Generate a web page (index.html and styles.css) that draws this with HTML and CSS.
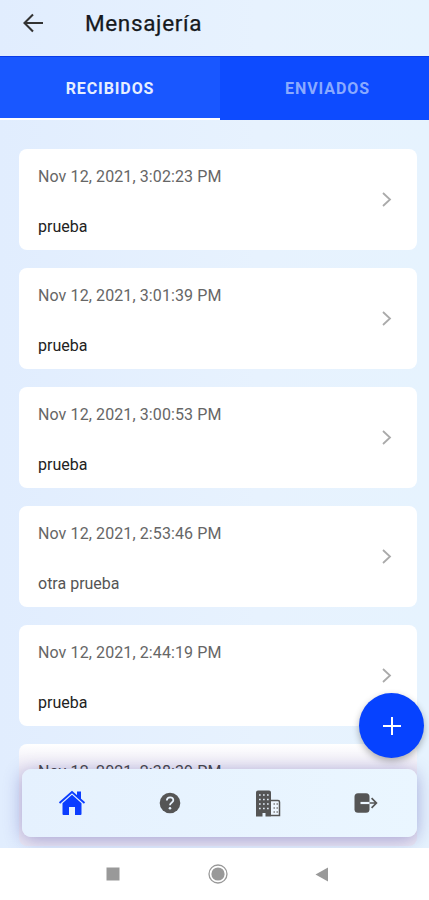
FILE: index.html
```
<!DOCTYPE html>
<html lang="es">
<head>
<meta charset="utf-8">
<title>Mensajería</title>
<link rel="stylesheet" href="styles.css">
</head>
<body>
<div class="app">
  <header class="header">
    <svg class="back" width="22" height="20" viewBox="0 0 22 20"><path d="M11 1.500 2.500 10l8.500 8.500M2.500 10H21"/></svg>
    <h1 class="title">Mensajería</h1>
  </header>
  <nav class="tabs">
    <div class="tab tab-active"><span>RECIBIDOS</span></div>
    <div class="tab tab-idle"><span>ENVIADOS</span></div>
  </nav>
  <main class="list">
    <article class="card"><div><p class="date">Nov 12, 2021, 3:02:23 PM</p><p class="message">prueba</p></div><svg class="chevron" width="10" height="16" viewBox="0 0 10 16"><path d="m1 1 7 6.500-7 6.500"/></svg></article>
    <article class="card"><div><p class="date">Nov 12, 2021, 3:01:39 PM</p><p class="message">prueba</p></div><svg class="chevron" width="10" height="16" viewBox="0 0 10 16"><path d="m1 1 7 6.500-7 6.500"/></svg></article>
    <article class="card"><div><p class="date">Nov 12, 2021, 3:00:53 PM</p><p class="message">prueba</p></div><svg class="chevron" width="10" height="16" viewBox="0 0 10 16"><path d="m1 1 7 6.500-7 6.500"/></svg></article>
    <article class="card"><div><p class="date">Nov 12, 2021, 2:53:46 PM</p><p class="message soft">otra prueba</p></div><svg class="chevron" width="10" height="16" viewBox="0 0 10 16"><path d="m1 1 7 6.500-7 6.500"/></svg></article>
    <article class="card"><div><p class="date">Nov 12, 2021, 2:44:19 PM</p><p class="message">prueba</p></div><svg class="chevron" width="10" height="16" viewBox="0 0 10 16"><path d="m1 1 7 6.500-7 6.500"/></svg></article>
    <article class="card"><div><p class="date">Nov 12, 2021, 2:38:39 PM</p></div></article>
  </main>
  <nav class="dock">
    <svg width="28" height="26" viewBox="0 0 28 26" class="home"><path d="M4.500 13.200 14 4.800 23.500 13.200V24q0 1-1 1h-5.500v-8h-6V25H5.500q-1 0-1-1zM19 1.500h4v8l-4-3.500z"/><path class="roof" d="M1.500 13 14 2l12.500 11"/></svg>
    <svg width="22" height="22" viewBox="0 0 22 22"><circle cx="11" cy="11" r="10.300" fill="#555"/><path d="M7.800 8.500Q8 5.300 11.200 5.300T14.300 8.300C14.300 10.500 11 10.600 11 13.300" fill="none" stroke="#e8f3fe" stroke-width="1.800"/><circle cx="11" cy="16.300" r="1.300" fill="#e8f3fe"/></svg>
    <svg width="26" height="27" viewBox="0 0 26 27"><path d="M1 26.500V2.500Q1 .5 3 .5H14Q16 .5 16 2.500V26.500H10.500V23H7.500V26.500z" fill="#555"/><path d="M16 10.500h7q1.500 0 1.500 1.500v13.500H16" fill="#edf6ff" stroke="#555" stroke-width="1.500"/><path d="M4 5h11M4 9.500h11M4 14h11M4 18.500h11" stroke="#dfe9f2" stroke-width="1.500" stroke-dasharray="1.700 2.300"/><path d="M18.500 14h4.500M18.500 18h4.500M18.500 22h4.500" stroke="#777" stroke-width="1.300" stroke-dasharray="1.400 1.600"/></svg>
    <svg width="24" height="20" viewBox="0 0 24 20"><rect x=".5" y=".3" width="15" height="19.400" rx="3.500" fill="#555"/><path d="M6.500 10H16" stroke="#edf6ff" stroke-width="2.200"/><path d="M15.500 10h7M17.600 5.200l4.800 4.800-4.800 4.800" fill="none" stroke="#555" stroke-width="1.700"/></svg>
  </nav>
  <button class="fab" aria-label="Nuevo mensaje"><svg width="18" height="18" viewBox="0 0 18 18"><path d="M9 0v18M0 9h18"/></svg></button>
</div>
<footer class="system">
  <svg width="14" height="14"><rect x=".5" y=".5" width="13" height="13" fill="#999"/></svg>
  <svg width="20" height="20"><circle cx="10" cy="10" r="9" fill="none" stroke="#999" stroke-width="1.300"/><circle cx="10" cy="10" r="6.600" fill="#999"/></svg>
  <svg width="14" height="15"><path d="M.5 7.500 13 .5v14z" fill="#999"/></svg>
</footer>
</body>
</html>
```
FILE: styles.css
```
* { box-sizing: border-box; }
body { margin: 0; height: 900px; overflow: hidden; background: #fff; font-family: Roboto, sans-serif; }
svg { display: block; flex: none; }
.app { position: relative; height: 848px; overflow: hidden; background: linear-gradient(90deg, #e1edfe, #e7f2fe 60%, #e6f3fe); }
.header { display: flex; height: 56px; padding: 0 0 10px 22px; align-items: center; }
.back { fill: none; stroke: #333; stroke-width: 2.100; }
.title { margin: 0 0 0 41px; font-size: 22.500px; line-height: 28px; font-weight: 400; letter-spacing: .65px; color: #16191d; -webkit-text-stroke: .25px #16191d; }
.tabs { display: grid; grid-template-columns: 220px 1fr; height: 64px; }
.tab { display: flex; align-items: center; justify-content: center; background: #0d4bff; border-top: 1px solid #0a3ce8; color: #8aaaff; font-size: 16px; font-weight: 700; letter-spacing: .9px; }
.tab-active { background: #1957ff; color: #e6eeff; border-bottom: 2px solid #fff; padding-top: 2px; }
.tab-idle { padding-left: 6px; }
.list { display: flex; flex-direction: column; gap: 18px; padding: 29px 12px 0 19px; }
.card { display: flex; justify-content: space-between; align-items: center; flex: none; height: 101.100px; padding: 4px 25px 0 19px; border-radius: 8px; background: #fff; }
.card:last-child { align-items: flex-start; padding-top: 18px; background: linear-gradient(#fff, #ece9f4 26px); }
.card:last-child .date { color: #444; }
.date, .message { margin: 0; font-size: 16px; line-height: 20px; }
.date { color: #666; letter-spacing: .1px; }
.message { margin-top: 30px; color: #222; }
.soft { color: #555; }
.chevron { fill: none; stroke: #aaa; stroke-width: 1.800; margin-bottom: 4px; }
.dock { position: absolute; left: 22px; top: 769px; width: 395px; height: 68px; padding: 0 39px 0 36px; display: flex; align-items: center; justify-content: space-between; border-radius: 9px; background: linear-gradient(90deg, #e5f1fe, #eaf6ff); box-shadow: 0 3px 18px rgba(70, 65, 165, .42); }
.home { fill: #0b3dff; }
.roof { fill: none; stroke: #0b3dff; stroke-width: 1.800; }
.fab { position: absolute; left: 359px; top: 693px; width: 65px; height: 65px; padding: 0; border: 0; border-radius: 50%; display: grid; place-items: center; background: #0642ff; box-shadow: 0 3px 7px rgba(0, 0, 0, .3); }
.fab svg { fill: none; stroke: #fff; stroke-width: 2; }
.system { display: flex; height: 52px; align-items: center; justify-content: space-between; padding: 0 100px 0 106px; }
```
